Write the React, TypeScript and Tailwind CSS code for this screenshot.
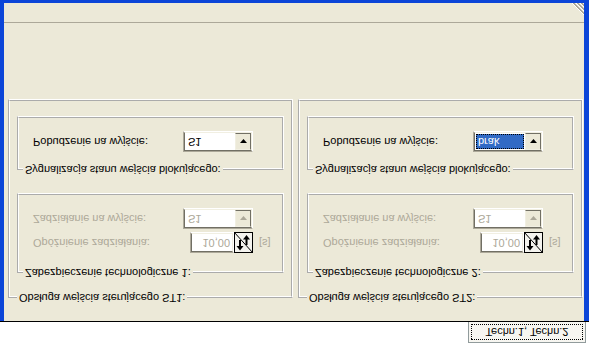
// The reference is a vertically mirrored capture, so the dialog is laid out
// the normal way and the whole page is flipped at the root.

const EDGE_OUT = "border border-t-[#aca899] border-l-[#aca899] border-b-white border-r-white";
const EDGE_IN = "border border-t-[#716f64] border-l-[#716f64] border-b-[#f1efe2] border-r-[#f1efe2]";

function DropButton({ disabled }: { disabled?: boolean }) {
  return (
    <div className="flex w-[16px] items-center justify-center border border-t-[#f1efe2] border-l-[#f1efe2] border-b-[#716f64] border-r-[#716f64] bg-[#ece9d8]">
      <svg width="7" height="4" viewBox="0 0 7 4">
        <path d="M0 0h7L3.5 4z" fill={disabled ? "#aca899" : "#000"} />
      </svg>
    </div>
  );
}

function Combo({ value, disabled, selected }: { value: string; disabled?: boolean; selected?: boolean }) {
  return (
    <div className={`flex h-[21px] w-[70px] ${EDGE_OUT}`}>
      <div className={`flex flex-1 bg-white ${EDGE_IN}`}>
        <div className="flex flex-1 items-center p-[1px]">
          {selected ? (
            <span className="flex h-full flex-1 items-center border border-dotted border-black bg-[#316ac5] pl-[1px] text-white">
              {value}
            </span>
          ) : (
            <span className={`pl-[2px] ${disabled ? "text-[#aca899]" : "text-black"}`}>{value}</span>
          )}
        </div>
        <DropButton disabled={disabled} />
      </div>
    </div>
  );
}

function SpinButton() {
  // drawn as it looks in the picture, then mirrored back
  return (
    <svg width="19" height="21" viewBox="0 0 19 21">
      <g transform="translate(0 21) scale(1 -1)">
        <rect x="0.5" y="0.5" width="18" height="20" fill="#f4f3ee" stroke="#000" />
        <line x1="0" y1="0" x2="19" y2="21" stroke="#000" />
        <path d="M12.5 6v7" stroke="#000" strokeWidth="2" />
        <path d="M9 7.5l3.5-4.5 3.5 4.5z" fill="#000" />
        <path d="M6 8v7" stroke="#000" strokeWidth="2" />
        <path d="M2.5 14l3.5 4.5 3.5-4.5z" fill="#000" />
      </g>
    </svg>
  );
}

function Spinner({ value }: { value: string }) {
  return (
    <div className="flex h-[21px]">
      <div className={`flex w-[44px] ${EDGE_OUT}`}>
        <div className={`flex flex-1 items-center justify-end bg-white pr-[2px] text-[#aca899] ${EDGE_IN}`}>{value}</div>
      </div>
      <SpinButton />
    </div>
  );
}

function Channel({ st, n, focused }: { st: string; n: number; focused?: boolean }) {
  return (
    <fieldset className="w-[285px] border-2 border-white [border-style:groove] pl-[7px] pr-[7px] pt-[12px] pb-[15px]">
      <legend className="px-[2px]">Obsługa wejścia sterującego {st}:</legend>

      <fieldset className="w-[267px] border-2 border-white [border-style:groove] pl-[14px] pt-[13px] pb-[13px]">
        <legend className="-ml-[10px] px-[2px]">Zabezpieczenie technologiczne {n}:</legend>
        <div className="flex h-[21px] items-center">
          <span className="w-[150px] text-[#aca899]">Opóźnienie zadziałania:</span>
          <div className="flex w-[70px] justify-end">
            <Spinner value="10,00" />
          </div>
          <span className="ml-[6px] text-[#aca899]">[s]</span>
        </div>
        <div className="mt-[3px] flex h-[21px] items-center">
          <span className="w-[150px] text-[#aca899]">Zadziałanie na wyjście:</span>
          <Combo value="S1" disabled />
        </div>
      </fieldset>

      <fieldset className="mt-[17px] w-[267px] border-2 border-white [border-style:groove] pl-[14px] pt-[11px] pb-[13px]">
        <legend className="-ml-[10px] px-[2px]">Sygnalizacja stanu wejścia blokującego:</legend>
        <div className="flex h-[21px] items-center">
          <span className="w-[150px] text-black">Pobudzenie na wyjście:</span>
          {focused ? <Combo value="brak" selected /> : <Combo value="S1" />}
        </div>
      </fieldset>
    </fieldset>
  );
}

export default function App() {
  return (
    <div className="flex h-[343px] w-[589px] flex-col bg-white font-['Liberation_Sans',Arial,sans-serif] text-[11px] leading-[13px] text-black [transform:scaleY(-1)]">
      {/* tab strip */}
      <div className="flex h-[21px] justify-end pr-[3px]">
        <div className="flex w-[118px] border-x border-t border-[#919b9c] bg-[#f7f6f1] p-[2px]">
          <div className="flex flex-1 items-center justify-center border border-dotted border-black">Techn.1, Techn.2</div>
        </div>
      </div>
      <div className="h-px bg-black" />

      {/* page */}
      <div className="flex flex-1 flex-col border-b-[3px] border-l-[4px] border-r-[5px] border-[#0b45d8] bg-[#ece9d8]">
        <div className="flex gap-[5px] pl-[4px] pt-[17px]">
          <Channel st="ST1" n={1} />
          <Channel st="ST2" n={2} focused />
        </div>
        <div className="flex-1" />
        <div className="flex h-[20px] items-end justify-end border-t border-[#aca899]">
          <svg width="12" height="12" viewBox="0 0 12 12">
            {[0, 4, 8].map(k => (
              <g key={k}>
                <line x1={k} y1="12" x2="12" y2={k} stroke="#fff" />
                <line x1={k + 1} y1="12" x2="12" y2={k + 1} stroke="#aca899" />
                <line x1={k + 2} y1="12" x2="12" y2={k + 2} stroke="#aca899" />
              </g>
            ))}
          </svg>
        </div>
      </div>
    </div>
  );
}
